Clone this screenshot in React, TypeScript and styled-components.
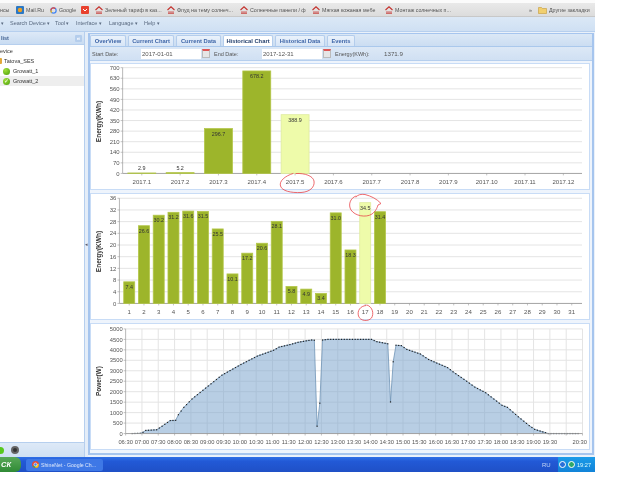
import React from "react";
import styled, { createGlobalStyle } from "styled-components";

const Global = createGlobalStyle`
  html, body { margin: 0; padding: 0; background: #fff; }
  * { box-sizing: border-box; }
  text { font-family: "Liberation Sans", Arial, sans-serif; }
`;

const Screen = styled.div`
  position: relative;
  width: 595px;
  height: 472px;
  display: flex;
  flex-direction: column;
  overflow: hidden;
  font-family: "Liberation Sans", Arial, sans-serif;
  font-size: 5.5px;
  color: #444;
  filter: blur(0.3px);
`;
const TopStrip = styled.div`height: 3px; background: #fbfbfb; flex: none;`;
const Bookmarks = styled.div`
  height: 14px; flex: none; display: flex; align-items: center;
  background: linear-gradient(#e9e9e9, #dcdcdc);
  border-bottom: 1px solid #c8c8c8;
  position: relative;
  padding-top: 1px;
  font-size: 5.3px;
`;
const Mark = styled.span<{ $w: number }>`
  width: ${p => p.$w}px; flex: none; display: flex; align-items: center; gap: 2px;
  white-space: nowrap; color: #555;
`;
const MarkSpacer = styled.span`flex: 1;`;
const Menu = styled.div`
  height: 15px; flex: none; display: flex; align-items: center; padding: 0 0 2px 1px;
  background: linear-gradient(#dbe8f6, #cfe0f3);
  border-bottom: 1px solid #b6cfee;
  color: #5a6a80;
`;
const MenuItem = styled.span<{ $w: number }>`
  width: ${p => p.$w}px; flex: none; white-space: nowrap;
  &::after { content: " ▾"; font-size: 5px; }
`;
const Workspace = styled.div`flex: 1; min-height: 0; display: flex; background: #eaf1fa;`;
const Sidebar = styled.div`
  width: 85px; flex: none; display: flex; flex-direction: column; background: #fff;
  border-right: 1px solid #b6cfee;
`;
const SideHead = styled.div`
  height: 13px; flex: none; display: flex; align-items: center; justify-content: space-between;
  padding: 0 2px 0 1px; background: linear-gradient(#dde9f7, #c9dcf2); color: #3f5f8f; font-weight: bold;
  border-bottom: 1px solid #b6cfee;
`;
const Collapse = styled.span`
  width: 7px; height: 7px; background: #b4cdec; color: #fff; font-size: 6px; line-height: 6px;
  text-align: center; border-radius: 1px;
`;
const Tree = styled.div`flex: 1; display: flex; flex-direction: column; padding-top: 1px;`;
const TreeRow = styled.div<{ $indent?: number; $selected?: boolean }>`
  height: 10px; flex: none; display: flex; align-items: center; gap: 2px; color: #333;
  padding-left: ${p => p.$indent ?? 0}px;
  background: ${p => (p.$selected ? "#eeeeee" : "transparent")};
`;
const Folder = styled.span`
  width: 2px; height: 6px; background: #e2a93b; border-radius: 0 1px 1px 0; flex: none;
`;
const Dot = styled.span`
  width: 7px; height: 7px; border-radius: 50%; flex: none; margin-right: 1px;
  background: radial-gradient(circle at 35% 30%, #9fe03a, #4a9c08);
  color: #fff; font-size: 6px; line-height: 7px; text-align: center;
`;
const SideFoot = styled.div`
  height: 15px; flex: none; display: flex; align-items: center; gap: 7px;
  background: linear-gradient(#dde9f7, #cfe0f3); border-top: 1px solid #b6cfee;
`;
const FootGreen = styled.span`
  width: 4px; height: 7px; border-radius: 0 4px 4px 0; background: #58c81e; flex: none;
`;
const FootDark = styled.span`
  width: 8px; height: 8px; border-radius: 50%; background: #333; border: 2px solid #666; flex: none;
`;
const Splitter = styled.div`
  width: 3px; flex: none; display: flex; align-items: center; background: #e4edf8;
  color: #556; font-size: 5px; line-height: 5px;
`;
const Main = styled.div`
  width: 506px; flex: none; margin: 1px 0 2px 0; display: flex; flex-direction: column;
  border: 2px solid #a6c5ee; border-top-width: 1px; background: #eef4fc;
`;
const Tabs = styled.div`
  height: 13px; flex: none; display: flex; align-items: flex-end; gap: 2px;
  background: linear-gradient(#dbe8f6, #cbddf2); border-bottom: 1px solid #aac8ec;
`;
const Tab = styled.div<{ $w: number; $active?: boolean }>`
  width: ${p => p.$w}px; height: 11px; flex: none; text-align: center; line-height: 10px;
  font-weight: bold; font-size: 5.8px; white-space: nowrap;
  color: ${p => (p.$active ? "#25406d" : "#3f66a8")};
  background: ${p => (p.$active ? "#ffffff" : "linear-gradient(#eaf2fb, #d7e5f6)")};
  border: 1px solid #b4cdec; border-bottom: none; border-radius: 2px 2px 0 0;
`;
const Toolbar = styled.div`
  height: 14px; flex: none; display: flex; align-items: center; padding-left: 2px;
  background: linear-gradient(#dce8f6, #d0e0f3); border-bottom: 1px solid #b6cfee; color: #555;
`;
const Label = styled.span<{ $w: number; $value?: boolean }>`
  width: ${p => p.$w}px; flex: none; white-space: nowrap; font-size: ${p => (p.$value ? "6.2px" : "5.5px")};
`;
const DateInput = styled.span`
  width: 60px; height: 10px; flex: none; background: #fff; padding-left: 1px; line-height: 10px;
  color: #555; font-size: 6px;
`;
const CalButton = styled.span`
  width: 8px; height: 9px; flex: none; margin: 0 4px 0 1px; background: #e6e6e6; border: 1px solid #bbb;
  border-top: 2px solid #d55;
`;
const Charts = styled.div`
  flex: 1; min-height: 0; display: flex; flex-direction: column; gap: 3px; padding: 2px 2px 3px 0;
`;
const Card = styled.div<{ $h: number }>`
  height: ${p => p.$h}px; flex: none; background: #fff; border: 1px solid #c8dcf6; overflow: hidden;
`;
const ChartSvg = styled.svg`display: block; width: 100%; height: 100%;`;
const Notes = styled.svg`position: absolute; left: 0; top: 0; width: 595px; height: 472px; pointer-events: none;`;
const Taskbar = styled.div`
  height: 15px; flex: none; display: flex; align-items: center; color: #fff;
  background: linear-gradient(#2f6fe6, #2259d6 30%, #1f50c6);
`;
const Start = styled.div`
  width: 21px; height: 15px; flex: none; padding-left: 1px; line-height: 15px;
  background: linear-gradient(#59a858, #2f8a35); border-radius: 0 6px 6px 0;
  font-style: italic; font-weight: bold; font-size: 7.5px;
`;
const TaskButton = styled.div`
  width: 77px; height: 12px; margin-left: 5px; flex: none; display: flex; align-items: center; gap: 2px;
  padding-left: 6px; background: #3e78e6; border-radius: 2px; font-size: 5.2px; white-space: nowrap; color: #dfe9fb;
`;
const TaskGap = styled.div`flex: 1;`;
const Lang = styled.span`width: 16px; flex: none; color: #c5d6f5; font-size: 6px;`;
const Tray = styled.div`
  width: 37px; height: 15px; flex: none; display: flex; align-items: center; gap: 2px; padding-left: 1px;
  background: linear-gradient(#1a9be8, #1283d8); font-size: 5.6px; color: #dff;
`;
const TrayIcon = styled.span<{ $c: string }>`
  width: 7px; height: 7px; border-radius: 50%; flex: none; background: ${p => p.$c}; border: 1px solid #fff;
`;

const House = () => (
  <svg width="8" height="8" viewBox="0 0 8 8">
    <path d="M0.5 4 4 0.8 7.5 4" fill="none" stroke="#c4302b" strokeWidth="1.1" />
    <rect x="1" y="5" width="6" height="2.4" fill="#d8a0a0" />
    <rect x="1" y="6.8" width="6" height="0.8" fill="#c4302b" />
  </svg>
);
const Chrome = ({ s = 7 }: { s?: number }) => (
  <svg width={s} height={s} viewBox="0 0 8 8">
    <circle cx="4" cy="4" r="4" fill="#e04a3a" />
    <path d="M4 4 7.5 6 4 8 0.5 6 Z" fill="#3aa757" />
    <path d="M4 4 8 3 7 7 4 8 Z" fill="#f5c518" />
    <circle cx="4" cy="4" r="1.8" fill="#4285f4" stroke="#fff" strokeWidth="0.7" />
  </svg>
);

const MARKS: { t: string; w: number; icon?: React.ReactNode }[] = [
  { t: "нсы", w: 16 },
  { t: "Mail.Ru", w: 34, icon: <svg width="8" height="8" viewBox="0 0 8 8"><rect width="8" height="8" rx="1" fill="#2b78c5" /><circle cx="4" cy="4" r="2.2" fill="#f0a020" /></svg> },
  { t: "Google", w: 31, icon: <svg width="7" height="7" viewBox="0 0 8 8"><circle cx="4" cy="4" r="3" fill="none" stroke="#4285f4" strokeWidth="1.4" /><path d="M1 4a3 3 0 0 1 5-2.3" fill="none" stroke="#ea4335" strokeWidth="1.4" /><path d="M2 6.3A3 3 0 0 1 1 4" fill="none" stroke="#fbbc05" strokeWidth="1.4" /></svg> },
  { t: "", w: 14, icon: <svg width="8" height="8" viewBox="0 0 8 8"><rect width="8" height="8" rx="1" fill="#e8412e" /><path d="M2 3 4 5 6 3" fill="none" stroke="#fff" strokeWidth="1" /></svg> },
  { t: "Зеленый тариф в каз...", w: 72, icon: <House /> },
  { t: "Флуд на тему солнеч...", w: 73, icon: <House /> },
  { t: "Солнечные панели / ф", w: 72, icon: <House /> },
  { t: "Мягкая кожаная мебе", w: 73, icon: <House /> },
  { t: "Монтаж солнечных п...", w: 70, icon: <House /> },
];

const MENU = [
  { t: "Search Device", w: 45 }, { t: "Tool", w: 21 }, { t: "Interface", w: 33 },
  { t: "Language", w: 35 }, { t: "Help", w: 20 },
];

const TABS = [
  { t: "OverView", w: 36 }, { t: "Current Chart", w: 46 }, { t: "Current Data", w: 45 },
  { t: "Historical Chart", w: 50, active: true }, { t: "Historical Data", w: 50 }, { t: "Events", w: 28 },
];

const GREEN = "#9db52b", GREEN_EDGE = "#b3c648", LIGHT = "#eefbaa", LIGHT_EDGE = "#dfeb9f";
const AXIS = "#999", GRID = "#e4e4e4", TXT = "#555";

type BarSpec = {
  vb: string; axisX: number; y0: number; yTop: number; max: number; step: number; right: number;
  centers: number[]; labels: string[]; values: number[]; barW: number; hi: number; titleY: number; fmt?: (v: number) => string;
};

const BarChart = ({ s }: { s: BarSpec }) => {
  const scale = (s.y0 - s.yTop) / s.max;
  const ticks: number[] = [];
  for (let v = 0; v <= s.max; v += s.step) ticks.push(v);
  return (
    <ChartSvg viewBox={s.vb} preserveAspectRatio="none">
      {ticks.map(v => {
        const y = s.y0 - v * scale;
        return (
          <g key={v}>
            {v > 0 && <line x1={s.axisX} x2={s.right} y1={y} y2={y} stroke={GRID} strokeWidth={1} />}
            <line x1={s.axisX - 2} x2={s.axisX} y1={y} y2={y} stroke={AXIS} strokeWidth={0.6} />
            <text x={s.axisX - 3} y={y + 2.2} textAnchor="end" fontSize={6} fill={TXT}>{v}</text>
          </g>
        );
      })}
      <line x1={s.axisX} x2={s.axisX} y1={s.yTop} y2={s.y0} stroke={AXIS} strokeWidth={0.7} />
      <line x1={s.axisX} x2={s.right} y1={s.y0} y2={s.y0} stroke={AXIS} strokeWidth={0.9} />
      {s.centers.map((c, i) => (
        <g key={i}>
          <line x1={c} x2={c} y1={s.y0} y2={s.y0 + 2} stroke={AXIS} strokeWidth={0.6} />
          <text x={c} y={s.y0 + 11} textAnchor="middle" fontSize={6.1} fill={TXT}>{s.labels[i]}</text>
        </g>
      ))}
      {s.values.map((v, i) => {
        const h = v * scale;
        const hi = i === s.hi;
        const above = h < 12 && s.barW > 20;
        return (
          <g key={i}>
            <rect
              x={s.centers[i] - s.barW / 2} y={s.y0 - h} width={s.barW} height={h}
              fill={hi ? LIGHT : GREEN} stroke={hi ? LIGHT_EDGE : GREEN_EDGE} strokeWidth={0.8}
            />
            <text
              x={s.centers[i]} y={above ? s.y0 - h - 2.5 : s.y0 - h + 7}
              textAnchor="middle" fontSize={5.4} fill="#333"
            >
              {s.fmt ? s.fmt(v) : v}
            </text>
          </g>
        );
      })}
      <text
        transform={`translate(101 ${s.titleY}) rotate(-90)`} textAnchor="middle"
        fontSize={6.6} fontWeight="bold" fill="#333"
      >
        Energy(KWh)
      </text>
    </ChartSvg>
  );
};

const MONTHS: BarSpec = {
  vb: "91 63 499 126", axisX: 122.7, y0: 173.3, yTop: 66.7, max: 700, step: 70, right: 583,
  centers: Array.from({ length: 12 }, (_, i) => 141.9 + i * 38.4),
  labels: Array.from({ length: 12 }, (_, i) => `2017.${i + 1}`),
  values: [2.9, 5.2, 296.7, 678.2, 388.9], barW: 28, hi: 4, titleY: 121,
};
const DAYS: BarSpec = {
  vb: "91 193 499 126", axisX: 119.5, y0: 303.3, yTop: 197.3, max: 36, step: 4, right: 583,
  centers: Array.from({ length: 31 }, (_, i) => 129.3 + i * 14.78),
  labels: Array.from({ length: 31 }, (_, i) => `${i + 1}`),
  values: [7.4, 26.6, 30.2, 31.2, 31.6, 31.5, 25.5, 10.1, 17.2, 20.6, 28.1, 5.8, 4.9, 3.4, 31.0, 18.3, 34.5, 31.4],
  barW: 11, hi: 16, titleY: 251, fmt: v => v.toFixed(1),
};

const KEYS: [number, number][] = [
  [12, 0], [27, 10], [32, 60], [37, 150], [57, 180], [67, 350], [82, 620], [92, 630], [97, 900],
  [107, 1250], [122, 1650], [147, 2170], [177, 2790], [212, 3300], [242, 3700], [272, 3980], [282, 4130],
  [302, 4250], [317, 4360], [332, 4430], [342, 4470], [347, 4460], [352, 350], [357, 1450], [362, 4470],
  [372, 4500], [452, 4500], [462, 4390], [482, 4290], [487, 1510], [492, 3430], [497, 4220], [507, 4200],
  [517, 4020], [542, 3800], [557, 3540], [572, 3370], [592, 3150], [602, 2950], [627, 2500], [642, 2220],
  [662, 1950], [692, 1350], [702, 1250], [722, 800], [742, 380], [752, 200], [777, 0], [832, 0],
];
const power = (t: number) => {
  for (let i = 1; i < KEYS.length; i++) {
    if (t <= KEYS[i][0]) {
      const [a, va] = KEYS[i - 1];
      const [b, vb] = KEYS[i];
      return va + ((vb - va) * (t - a)) / (b - a);
    }
  }
  return 0;
};
const TIMES = Array.from({ length: 29 }, (_, i) => {
  const m = 390 + i * 30;
  return `${String(Math.floor(m / 60)).padStart(2, "0")}:${m % 60 ? "30" : "00"}`;
});

const PowerChart = () => {
  const x0 = 125.7, dx = 16.35, y0 = 434.3, yTop = 328, right = 583.5;
  const X = (t: number) => x0 + (t / 30) * dx;
  const Y = (v: number) => y0 - (v / 5000) * (y0 - yTop);
  const pts = Array.from({ length: 165 }, (_, k) => 12 + 5 * k).map(t => [X(t), Y(power(t))] as const);
  const line = pts.map(p => `${p[0].toFixed(1)} ${p[1].toFixed(1)}`).join(" L");
  const ys = Array.from({ length: 11 }, (_, i) => i * 500);
  return (
    <ChartSvg viewBox="91 323 499 127" preserveAspectRatio="none">
      {TIMES.map((t, i) => (
        <g key={t}>
          {i > 0 && <line x1={x0 + i * dx} x2={x0 + i * dx} y1={yTop} y2={y0} stroke={GRID} strokeWidth={1} />}
          <line x1={x0 + i * dx} x2={x0 + i * dx} y1={y0} y2={y0 + 2} stroke={AXIS} strokeWidth={0.6} />
          {t === "20:30" ? (
            <text x={588} y={y0 + 10.5} textAnchor="end" fontSize={5.8} fill={TXT}>{t}</text>
          ) : t !== "20:00" ? (
            <text x={x0 + i * dx} y={y0 + 10.5} textAnchor="middle" fontSize={5.8} fill={TXT}>{t}</text>
          ) : null}
        </g>
      ))}
      {ys.map(v => (
        <g key={v}>
          {v > 0 && <line x1={x0} x2={right} y1={Y(v)} y2={Y(v)} stroke={GRID} strokeWidth={1} />}
          <line x1={x0 - 2} x2={x0} y1={Y(v)} y2={Y(v)} stroke={AXIS} strokeWidth={0.6} />
          <text x={x0 - 3} y={Y(v) + 2.2} textAnchor="end" fontSize={5.8} fill={TXT}>{v}</text>
        </g>
      ))}
      <path d={`M${line} L${pts[pts.length - 1][0].toFixed(1)} ${y0} L${pts[0][0].toFixed(1)} ${y0} Z`} fill="#7ea5cd" fillOpacity={0.55} />
      <path d={`M${line}`} fill="none" stroke="#6f93b5" strokeWidth={0.8} />
      {pts.map((p, i) => <rect key={i} x={p[0] - 0.6} y={p[1] - 0.6} width={1.2} height={1.2} fill="#222" />)}
      <line x1={x0} x2={x0} y1={yTop} y2={y0} stroke={AXIS} strokeWidth={0.7} />
      <line x1={x0} x2={right} y1={y0} y2={y0} stroke={AXIS} strokeWidth={0.9} />
      <text transform="translate(101 381) rotate(-90)" textAnchor="middle" fontSize={6.6} fontWeight="bold" fill="#333">Power(W)</text>
    </ChartSvg>
  );
};

export default function App() {
  return (
    <Screen>
      <Global />
      <TopStrip />
      <Bookmarks>
        {MARKS.map((m, i) => (
          <Mark key={i} $w={m.w}>{m.icon}{m.t}</Mark>
        ))}
        <MarkSpacer />
        <Mark $w={9}>»</Mark>
        <Mark $w={57}>
          <svg width="9" height="8" viewBox="0 0 9 8"><path d="M0.5 1.5h3l1 1h4v5h-8z" fill="#f1cf6e" stroke="#c49a3a" strokeWidth="0.6" /></svg>
          Другие закладки
        </Mark>
      </Bookmarks>
      <Menu>
        <MenuItem $w={9} />
        {MENU.map(m => <MenuItem key={m.t} $w={m.w}>{m.t}</MenuItem>)}
      </Menu>
      <Workspace>
        <Sidebar>
          <SideHead>list<Collapse>«</Collapse></SideHead>
          <Tree>
            <TreeRow>evice</TreeRow>
            <TreeRow><Folder />Tatova_SES</TreeRow>
            <TreeRow $indent={3}><Dot />Growatt_1</TreeRow>
            <TreeRow $indent={3} $selected><Dot>✓</Dot>Growatt_2</TreeRow>
          </Tree>
          <SideFoot><FootGreen /><FootDark /></SideFoot>
        </Sidebar>
        <Splitter>◂</Splitter>
        <Main>
          <Tabs>
            {TABS.map(t => <Tab key={t.t} $w={t.w} $active={t.active}>{t.t}</Tab>)}
          </Tabs>
          <Toolbar>
            <Label $w={49}>Start Date:</Label>
            <DateInput>2017-01-01</DateInput>
            <CalButton />
            <Label $w={48}>End Date:</Label>
            <DateInput>2017-12-31</DateInput>
            <CalButton />
            <Label $w={49}>Energy(KWh):</Label>
            <Label $w={30} $value>1371.9</Label>
          </Toolbar>
          <Charts>
            <Card $h={127}><BarChart s={MONTHS} /></Card>
            <Card $h={127}><BarChart s={DAYS} /></Card>
            <Card $h={127}><PowerChart /></Card>
          </Charts>
        </Main>
      </Workspace>
      <Taskbar>
        <Start>СК</Start>
        <TaskButton><Chrome />ShineNet - Google Ch...</TaskButton>
        <TaskGap />
        <Lang>RU</Lang>
        <Tray><TrayIcon $c="#2a6fd8" /><TrayIcon $c="#2fa86a" />19:27</Tray>
      </Taskbar>
      <Notes viewBox="0 0 595 472">
        <g fill="none" stroke="#e8454a" strokeWidth="0.8" strokeLinecap="round">
          <path d="M293 173.5C285 176 279 181 280.500 186C282 191 291 193 301 192.500C310 192 315 187 314 181C313 176 305 173 296 173.500" />
          <path d="M356 196C350 198 348 205 351 210C355 216 366 218 372 214C376 211 377 208 378 205L381 203.500C377 199 371 196 365 194.500C361 194 358 194.500 356 197" />
          <path d="M366 305.500C360 306 357 311 358.500 316C360 321 368 322 371.500 318C374 314 373 307 367 305" />
        </g>
      </Notes>
    </Screen>
  );
}
